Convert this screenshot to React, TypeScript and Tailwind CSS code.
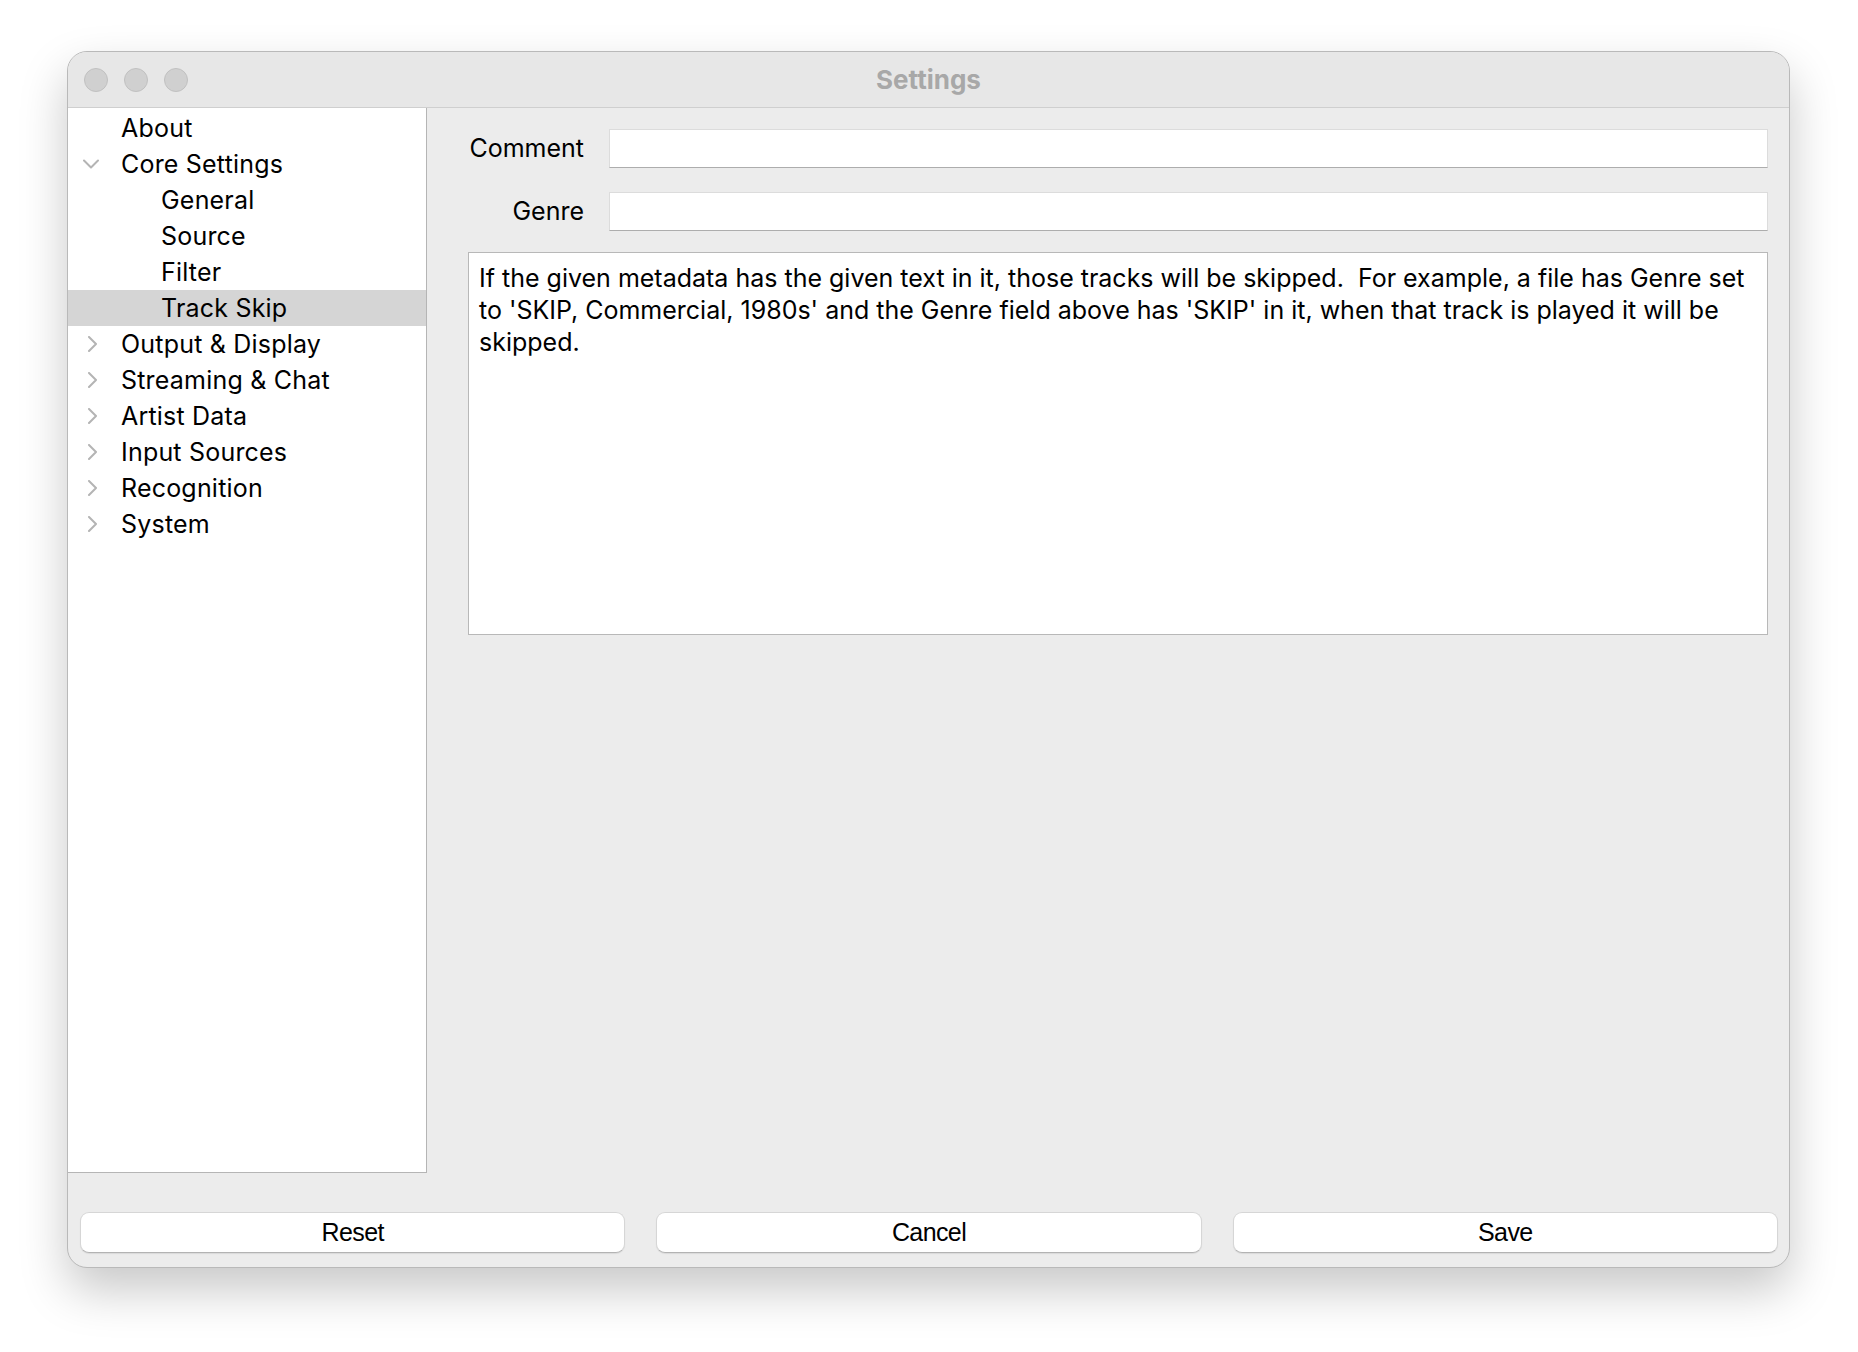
import React from 'react';

type Node = { label: string; depth: 0 | 1; chevron?: 'down' | 'right'; selected?: boolean };

const tree: Node[] = [
  { label: 'About', depth: 0 },
  { label: 'Core Settings', depth: 0, chevron: 'down' },
  { label: 'General', depth: 1 },
  { label: 'Source', depth: 1 },
  { label: 'Filter', depth: 1 },
  { label: 'Track Skip', depth: 1, selected: true },
  { label: 'Output & Display', depth: 0, chevron: 'right' },
  { label: 'Streaming & Chat', depth: 0, chevron: 'right' },
  { label: 'Artist Data', depth: 0, chevron: 'right' },
  { label: 'Input Sources', depth: 0, chevron: 'right' },
  { label: 'Recognition', depth: 0, chevron: 'right' },
  { label: 'System', depth: 0, chevron: 'right' },
];

const Chevron = ({ dir }: { dir: 'down' | 'right' }) =>
  dir === 'down' ? (
    <svg width="16" height="10" viewBox="0 0 16 10" className="absolute left-[15px] top-[13px]">
      <path d="M1 1.5 L8 8.5 L15 1.5" fill="none" stroke="#b4b4b4" strokeWidth="2" strokeLinecap="round" strokeLinejoin="round" />
    </svg>
  ) : (
    <svg width="11" height="16" viewBox="0 0 11 16" className="absolute left-[19px] top-[10px]">
      <path d="M2 1 L9 8 L2 15" fill="none" stroke="#b4b4b4" strokeWidth="2" strokeLinecap="round" strokeLinejoin="round" />
    </svg>
  );

const TreeRow = ({ node }: { node: Node }) => (
  <div
    className={
      'relative h-[36px] flex items-center ' +
      (node.depth === 0 ? 'pl-[53px] ' : 'pl-[93px] ') +
      (node.selected ? 'bg-[#d5d5d5]' : '')
    }
  >
    {node.chevron && <Chevron dir={node.chevron} />}
    <span className="text-[25px] tracking-[0.2px] text-black leading-none">{node.label}</span>
  </div>
);

const Field = ({ label }: { label: string }) => (
  <div className="flex items-center gap-[25px]">
    <span className="w-[116px] text-right text-[25px] text-black leading-none whitespace-nowrap">{label}</span>
    <div className="flex-1 h-[39px] bg-white border border-[#dcdcdc] border-b-[#adadad]" />
  </div>
);

const Button = ({ label }: { label: string }) => (
  <button className="flex-1 h-[41px] rounded-[9px] bg-white border border-[#d6d6d6] border-b-[#b3b3b3] shadow-[0_1px_1px_rgba(0,0,0,0.08)] text-[25px] tracking-[-0.6px] text-black font-['Liberation_Sans',sans-serif]">
    {label}
  </button>
);

export default function App() {
  return (
    <div className="min-h-screen bg-white pl-[67px] pt-[51px] font-['Inter',sans-serif]">
      <div className="w-[1723px] h-[1217px] flex flex-col rounded-[20px] overflow-hidden border border-[#b9b9b9] bg-[#ececec] shadow-[0_22px_48px_rgba(0,0,0,0.22)]">
        {/* title bar */}
        <div className="relative h-[56px] shrink-0 flex items-center bg-[#e7e7e7] border-b border-[#cfcfcf]">
          <div className="flex gap-[16px] pl-[16px]">
            <span className="w-[24px] h-[24px] rounded-full bg-[#d0d0d0] border border-[#c0c0c0]" />
            <span className="w-[24px] h-[24px] rounded-full bg-[#d0d0d0] border border-[#c0c0c0]" />
            <span className="w-[24px] h-[24px] rounded-full bg-[#d0d0d0] border border-[#c0c0c0]" />
          </div>
          <div className="absolute inset-0 flex items-center justify-center pointer-events-none">
            <span className="text-[26px] font-bold text-[#a8a8a8]">Settings</span>
          </div>
        </div>

        {/* body */}
        <div className="flex h-[1065px] shrink-0">
          <div className="w-[359px] shrink-0 bg-white border-r border-b border-[#b5b5b5] pt-[2px]">
            {tree.map((n) => (
              <TreeRow key={n.label} node={n} />
            ))}
          </div>
          <div className="flex-1 flex flex-col pl-[41px] pr-[21px] pt-[21px]">
            <div className="flex flex-col gap-[24px]">
              <Field label="Comment" />
              <Field label="Genre" />
            </div>
            <div className="mt-[21px] h-[383px] bg-white border border-[#b8b8b8] px-[10px] pt-[9px]">
              <p className="text-[25px] leading-[32px] text-black whitespace-nowrap">
                If the given metadata has the given text in it, those tracks will be skipped.&nbsp; For example, a file has Genre set
                <br />
                to 'SKIP, Commercial, 1980s' and the Genre field above has 'SKIP' in it, when that track is played it will be
                <br />
                skipped.
              </p>
            </div>
          </div>
        </div>

        {/* buttons */}
        <div className="flex-1 flex items-start gap-[31px] pl-[12px] pr-[11px] pt-[39px]">
          <Button label="Reset" />
          <Button label="Cancel" />
          <Button label="Save" />
        </div>
      </div>
    </div>
  );
}
